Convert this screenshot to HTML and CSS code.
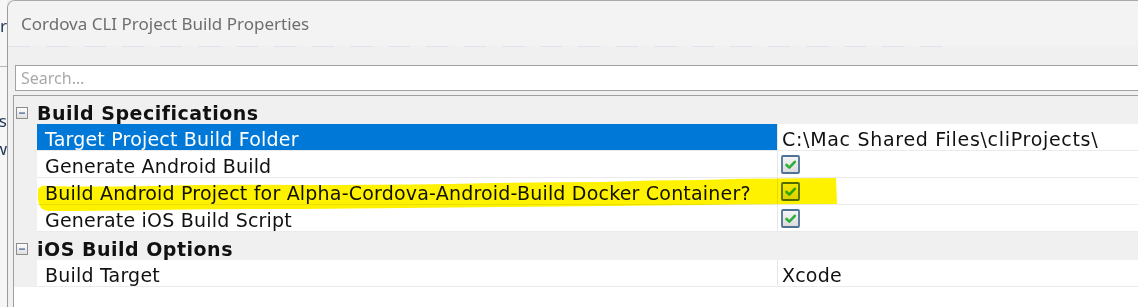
FILE: index.html
```html
<!DOCTYPE html>
<html lang="en">
<head>
    <meta charset="UTF-8">
    <title>Cordova CLI Project Build Properties</title>
    <link rel="stylesheet" href="styles.css">
</head>
<body>
<div class="screen">
    <!-- window behind the dialog, only its right edge shows -->
    <div class="behind">
        <span class="frag frag-top">er</span>
        <div class="behind-line"></div>
        <span class="frag frag-a">ts</span>
        <span class="frag frag-b">w</span>
    </div>

    <div class="dialog">
        <div class="titlebar">Cordova CLI Project Build Properties</div>
        <div class="ghost-line"></div>

        <div class="dialog-body">
            <div class="search"><span>Search…</span></div>

            <div class="grid">
                <div class="cat-row">
                    <span class="toggle">
                        <svg width="12" height="12" viewBox="0 0 12 12">
                            <defs>
                                <linearGradient id="tg" x1="0" y1="0" x2="0" y2="1">
                                    <stop offset="0" stop-color="#ffffff"/>
                                    <stop offset="1" stop-color="#dedede"/>
                                </linearGradient>
                            </defs>
                            <rect x="0.5" y="0.5" width="11" height="11" fill="url(#tg)" stroke="#8c8c8c"/>
                            <rect x="3" y="5.5" width="6" height="1.2" fill="#3c5a96"/>
                        </svg>
                    </span>
                    <span class="cat-name">Build Specifications</span>
                </div>
                <div class="row selected">
                    <div class="gutter"></div>
                    <div class="name">Target Project Build Folder</div>
                    <div class="value path">C:\Mac Shared Files\cliProjects\</div>
                </div>
                <div class="row">
                    <div class="gutter"></div>
                    <div class="name">Generate Android Build</div>
                    <div class="value">
                        <svg class="check" width="19" height="19" viewBox="0 0 19 19"><use href="#checkbox"/></svg>
                    </div>
                </div>
                <div class="row">
                    <div class="gutter"></div>
                    <div class="name">Build Android Project for Alpha-Cordova-Android-Build Docker Container?</div>
                    <div class="value">
                        <svg class="check" width="19" height="19" viewBox="0 0 19 19"><use href="#checkbox"/></svg>
                    </div>
                </div>
                <div class="row">
                    <div class="gutter"></div>
                    <div class="name">Generate iOS Build Script</div>
                    <div class="value">
                        <svg class="check" width="19" height="19" viewBox="0 0 19 19"><use href="#checkbox"/></svg>
                    </div>
                </div>
                <div class="cat-row">
                    <span class="toggle">
                        <svg width="12" height="12" viewBox="0 0 12 12">
                            <rect x="0.5" y="0.5" width="11" height="11" fill="url(#tg)" stroke="#8c8c8c"/>
                            <rect x="3" y="5.5" width="6" height="1.2" fill="#3c5a96"/>
                        </svg>
                    </span>
                    <span class="cat-name">iOS Build Options</span>
                </div>
                <div class="row">
                    <div class="gutter"></div>
                    <div class="name">Build Target</div>
                    <div class="value">Xcode</div>
                </div>

                <!-- highlighter stroke drawn over the third row -->
                <svg class="marker" width="900" height="130" viewBox="0 0 900 130">
                    <path d="M24,93 Q27,89 34,90 Q80,91 137,90 Q210,88 287,89 Q360,89 437,88 Q520,86 587,86 Q640,84 687,84 Q760,82 822,82 L823,108 Q760,108 687,109 Q590,110 487,111 Q390,112 287,113 Q210,113 137,114 Q80,115 34,115 Q25,114 24,104 Z" fill="#fff200"/>
                </svg>
            </div>
        </div>
    </div>
</div>

<svg width="0" height="0" class="defs">
    <defs>
        <linearGradient id="cbg" x1="0" y1="0" x2="0" y2="1">
            <stop offset="0" stop-color="#f6f6f6"/>
            <stop offset="1" stop-color="#dadada"/>
        </linearGradient>
        <g id="checkbox">
            <rect x="1" y="1" width="17" height="17" rx="1" fill="url(#cbg)" stroke="#4f7196" stroke-width="1.8"/>
            <path d="M5.5,10 L8.3,12.6 L13.8,6.8" fill="none" stroke="#2fae3a" stroke-width="2.6" stroke-linecap="round" stroke-linejoin="round"/>
        </g>
    </defs>
</svg>
</body>
</html>
```

FILE: styles.css
```css
body{
    margin: 0;
    padding: 0;
    background-color: #f0f0f0;
    font-family: "DejaVu Sans", Verdana, sans-serif;
}
.defs{
    position: absolute;
}
.screen{
    display: flex;
    width: 1138px;
    height: 307px;
    overflow: hidden;
}
.behind{
    width: 7px;
    flex: none;
    display: flex;
    flex-direction: column;
    align-items: flex-end;
    overflow: hidden;
    background-color: #f6f6f6;
}
.frag{
    white-space: nowrap;
    font-family: "Noto Sans", sans-serif;
    font-size: 17px;
    color: #1f3657;
    line-height: 20px;
}
.frag-top{
    margin-top: 16px;
}
.behind-line{
    width: 7px;
    height: 1px;
    margin-top: 30px;
    background-color: #b8b8b8;
}
.frag-a{
    margin-top: 44px;
}
.frag-b{
    margin-top: 8px;
}
.dialog{
    flex: none;
    width: 1160px;
    display: flex;
    flex-direction: column;
    border-left: 1px solid #9c9c9c;
    border-top: 1px solid #a8a8a8;
    border-top-left-radius: 8px;
    background-color: #f0f0f0;
}
.titlebar{
    height: 45px;
    display: flex;
    align-items: center;
    padding-left: 13px;
    background-color: #f3f3f3;
    border-top-left-radius: 7px;
    font-family: "Noto Sans", sans-serif;
    font-size: 17px;
    color: #6e6e6e;
}
.ghost-line{
    width: 935px;
    height: 1px;
    background: repeating-linear-gradient(90deg, #e2e1ec 0 22px, #eeeef2 22px 30px, #f1f1f3 30px 38px);
}
.dialog-body{
    flex: 1;
    display: flex;
    flex-direction: column;
    padding-top: 18px;
}
.search{
    height: 26px;
    box-sizing: border-box;
    margin-left: 7px;
    display: flex;
    align-items: center;
    padding-left: 5px;
    background-color: #fff;
    border: 1px solid #a3a3a3;
    font-family: "Noto Sans", sans-serif;
    font-size: 16px;
    color: #a9a9a9;
}
.grid{
    position: relative;
    flex: 1;
    margin-left: 5px;
    margin-top: 4px;
    background-color: #fff;
    border-left: 1px solid #a0a0a0;
    border-top: 1px solid #a0a0a0;
    font-size: 19px;
    letter-spacing: 0.2px;
    color: #111;
}
.cat-row{
    height: 28px;
    display: flex;
    align-items: center;
    background-color: #f0f0f0;
}
.toggle{
    width: 23px;
    flex: none;
    display: flex;
    padding-left: 2px;
    padding-top: 5px;
    box-sizing: border-box;
}
.cat-name{
    font-weight: bold;
    letter-spacing: 0.5px;
    padding-top: 5px;
}
.row{
    height: 27px;
    display: flex;
}
.gutter{
    width: 23px;
    flex: none;
    background-color: #f0f0f0;
}
.name{
    width: 740px;
    flex: none;
    box-sizing: border-box;
    display: flex;
    align-items: center;
    padding-left: 8px;
    padding-top: 3px;
    white-space: nowrap;
    border-bottom: 1px solid #ebebeb;
}
.value{
    flex: 1;
    display: flex;
    align-items: center;
    padding-left: 4px;
    padding-top: 3px;
    white-space: nowrap;
    border-left: 1px solid #e6e6e6;
    border-bottom: 1px solid #ebebeb;
}
.path{
    letter-spacing: 0.7px;
}
.selected .name{
    background-color: #0078d7;
    color: #fff;
}
.check{
    margin-left: -1px;
    margin-top: -2px;
}
.marker{
    position: absolute;
    left: 0;
    top: 0;
    mix-blend-mode: multiply;
    pointer-events: none;
}
```
